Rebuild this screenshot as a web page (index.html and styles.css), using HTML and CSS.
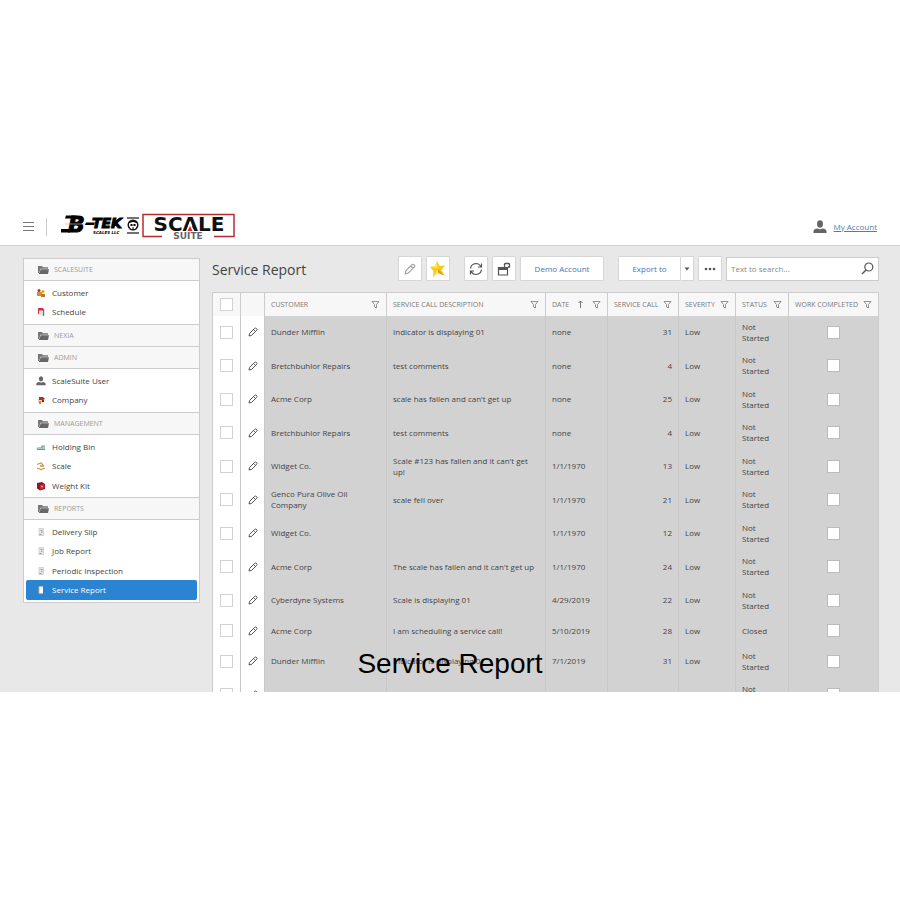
FILE: index.html
```html
<!DOCTYPE html>
<html lang="en">
<head>
  <meta charset="UTF-8">
  <title>Service Report</title>
  <meta name="viewport" content="width=device-width, initial-scale=1.0">
  <link rel="stylesheet" href="styles.css">
</head>
<body>
  <svg class="sprite" aria-hidden="true">
    <symbol id="folder" viewBox="0 0 12 10"><path d="M0 8V1h4l1 1.300h5v1.500H2.500L1 8z" fill="#777"/><path d="M2.800 4.200H11L10 9H.8z" fill="#686868"/></symbol>
    <symbol id="pencil" viewBox="0 0 10 10"><path d="M1 9l.6-2.600L6.500 1.500q1-1 2 0t0 2L3.600 8.400zM5.600 2.500l2 2" fill="none" stroke="currentColor" stroke-width=".9"/></symbol>
    <symbol id="filter" viewBox="0 0 9 9"><path d="M1 1.500h7L5.500 4.500V8l-2-1V4.500z" fill="none" stroke="#888" stroke-width=".9"/></symbol>
    <symbol id="user" viewBox="0 0 14 14"><ellipse cx="7" cy="4" rx="3" ry="3.700"/><path d="M.5 13q-.8-4 4-4.500Q7 10 9.500 8.500q4.800.5 4 4.500z"/></symbol>
    <symbol id="page" viewBox="0 0 10 10"><path d="M3 1.500h4.500v7H3z" fill="#e6e6e6" stroke="#c4c4c4" stroke-width=".7"/><path d="M4.500 3.500h2M5 5.500L6.500 5M3.500 7.500h2" stroke="#888" stroke-width=".8"/></symbol>
  </svg>

  <main class="frame">
    <header class="topbar">
      <button class="menu" aria-label="Menu"><svg width="11" height="10" viewBox="0 0 11 10"><path d="M0 .5h11M0 4.500h11M0 8.500h11" stroke="#777" stroke-width="1"/></svg></button>
      <svg class="logo" width="174" height="28" viewBox="0 0 174 28" role="img" aria-label="B-TEK Scale Suite">
        <path d="M5 2.500h10l-1 3H4zM0 16h10l-1 3.500H-1z" fill="#000"/>
        <g class="logo-btek">
          <text x="7" y="19" class="logo-b">B</text>
          <text x="31" y="15" class="logo-tek">TEK</text>
        </g>
        <path d="M4 11h25" stroke="#bbb" stroke-width=".7"/>
        <path d="M25 9.500h9l-1 2.500H24z" fill="#000"/>
        <text x="32" y="21" class="logo-llc">SCALES LLC</text>
        <path d="M66 5h12M66 20h12" stroke="#444" stroke-width="1.500"/>
        <circle cx="72" cy="12" r="5.500" fill="#111"/>
        <path d="M68 10.500q4-3 8 0v2.500l-2 3h-4l-2-3z" fill="#fff"/>
        <path d="M69.500 11h2v2h-2zM72.500 11h2v2h-2zM71 14.500h2v1h-2z"/>
        <path d="M101 23.500H82V1.500h91v22h-20" fill="none" stroke="#b92b33" stroke-width="1.500"/>
        <text x="128" y="18" class="logo-scale">SCALE</text>
        <path d="M129 8l4 10h-8z" fill="#fff"/>
        <path d="M129 13l2.500 5h-5z" fill="#d22"/>
        <text x="127" y="26" class="logo-suite">SUITE</text>
      </svg>
      <a class="account" href="#"><svg width="14" height="14"><use href="#user"/></svg><span>My Account</span></a>
    </header>

    <div class="content">
      <nav class="sidebar">
        <h2><svg width="12" height="10"><use href="#folder"/></svg>SCALESUITE</h2>
        <ul>
          <li><a href="#"><svg width="10" height="10" viewBox="0 0 10 10"><path d="M1 4h5v4H1z" fill="#c9942c"/><circle cx="3" cy="2.500" r="1.500" fill="#a33"/><circle cx="7" cy="3.500" r="1.500" fill="#d9a520"/><path d="M5 6h4v3H5z" fill="#b57a28"/></svg>Customer</a></li>
          <li><a href="#"><svg width="10" height="10" viewBox="0 0 10 10"><path d="M2 2l5-1 2 1v6l-3 1-4-2z" fill="#d9e4e2"/><path d="M2 1h5v2.500H2zM2 3h1v4H2z" fill="#d2304a"/><path d="M7.500 2v7" stroke="#577" stroke-width="1"/></svg>Schedule</a></li>
        </ul>
        <h2><svg width="12" height="10"><use href="#folder"/></svg>NEXIA</h2>
        <h2><svg width="12" height="10"><use href="#folder"/></svg>ADMIN</h2>
        <ul>
          <li><a href="#"><svg width="10" height="10" fill="#666"><use href="#user"/></svg>ScaleSuite User</a></li>
          <li><a href="#"><svg width="10" height="10" viewBox="0 0 10 10"><path d="M2 4h5v4H2z" fill="#e6d5b8"/><path d="M3 2h4l2 2-2 1H3z" fill="#a8352b"/><path d="M3 6h2v3H3z" fill="#e28a2a"/><path d="M6 5h2v2H6z" fill="#822"/></svg>Company</a></li>
        </ul>
        <h2><svg width="12" height="10"><use href="#folder"/></svg>MANAGEMENT</h2>
        <ul>
          <li><a href="#"><svg width="10" height="10" viewBox="0 0 10 10"><path d="M0 7l2-2h3l1-2h3v4z" fill="#a9cdbb"/><path d="M1 7.500h8M6 4v2" stroke="#6a9a86" stroke-width="1"/></svg>Holding Bin</a></li>
          <li><a href="#"><svg width="10" height="10" viewBox="0 0 10 10"><path d="M1 3.500L5 2l2 2M1 7l4 1.500L9 7" fill="none" stroke="#d29a35" stroke-width="1.300"/><path d="M4 5h4" stroke="#876" stroke-width="1.200"/></svg>Scale</a></li>
          <li><a href="#"><svg width="10" height="10" viewBox="0 0 10 10"><path d="M1 2l5-1 3 2v5l-5 1.500-3-2z" fill="#8b1825"/><path d="M4 4l4.500-1v4L4 8.500z" fill="#d0273b"/><path d="M5 5l2 1" stroke="#f7b4b8"/></svg>Weight Kit</a></li>
        </ul>
        <h2><svg width="12" height="10"><use href="#folder"/></svg>REPORTS</h2>
        <ul>
          <li><a href="#"><svg width="10" height="10"><use href="#page"/></svg>Delivery Slip</a></li>
          <li><a href="#"><svg width="10" height="10"><use href="#page"/></svg>Job Report</a></li>
          <li><a href="#"><svg width="10" height="10"><use href="#page"/></svg>Periodic Inspection</a></li>
          <li><a class="active" href="#"><svg width="10" height="10" viewBox="0 0 10 10"><path d="M3 1.500h4v7H3z" fill="#fff"/><path d="M3 1.500v7" stroke="#d8a868"/></svg>Service Report</a></li>
        </ul>
      </nav>

      <section class="report">
        <div class="toolbar">
          <h1>Service Report</h1>
          <button class="btn icon edit" aria-label="Edit"><svg width="12" height="12"><use href="#pencil"/></svg></button>
          <button class="btn icon star" aria-label="Favorite"><svg width="18" height="18" viewBox="0 0 18 18"><path d="M8 1l2.500 5L16 5.500 12.500 10l3 5.500L9 13l-5 4 .5-6L1 7l5-1z" fill="#f8c91c"/><path d="M8 1l.5 7L1 7l5-1zM9 9l-5 8 5-4z" fill="#ffe95a"/><path d="M9 9l6.500 6.500L9 13z" fill="#e0a010"/></svg></button>
          <button class="btn icon refresh" aria-label="Refresh"><svg width="14" height="14" viewBox="0 0 14 14"><path d="M1.500 6.500Q2 2 7 1.500q3.500 0 5 3.500M12.500 7.500Q12 12 7 12.500q-3.500 0-5-3.500M12.500 1.500V5H9M1.500 12.500V9H5" fill="none" stroke="#555" stroke-width="1.200"/></svg></button>
          <button class="btn icon" aria-label="Open in new window"><svg width="14" height="14" viewBox="0 0 14 14"><path d="M1.500 5.500h9V13h-9z" fill="none" stroke="#555" stroke-width="1.200"/><path d="M1 5h10v3H1z" fill="#555"/><path d="M7.500 5V2.500q0-1 1-1h3q1 0 1 1V5H11" fill="none" stroke="#555" stroke-width="1.300"/></svg></button>
          <button class="btn demo">Demo Account</button>
          <div class="export">
            <button class="btn">Export to</button>
            <button class="btn arrow" aria-label="Export options"><svg width="6" height="4" viewBox="0 0 6 4"><path d="M.5.500h5L3 3.500z" fill="#555"/></svg></button>
          </div>
          <button class="btn icon more" aria-label="More"><svg width="12" height="4" viewBox="0 0 12 4"><circle cx="2" cy="2" r="1.300"/><circle cx="6" cy="2" r="1.300"/><circle cx="10" cy="2" r="1.300"/></svg></button>
          <label class="search">
            <input type="text" placeholder="Text to search..." aria-label="Search">
            <svg width="13" height="13" viewBox="0 0 13 13"><circle cx="7.800" cy="5" r="4" fill="none" stroke="#555" stroke-width="1.200"/><path d="M5 8L1 12" stroke="#555" stroke-width="1.500"/></svg>
          </label>
        </div>

        <table class="grid">
          <colgroup>
            <col class="c-check"><col class="c-edit"><col class="c-customer"><col><col class="c-date"><col class="c-call"><col class="c-severity"><col class="c-status"><col class="c-done">
          </colgroup>
          <thead>
            <tr>
              <th><input type="checkbox" aria-label="Select all"></th>
              <th></th>
              <th><div>CUSTOMER<svg width="9" height="9"><use href="#filter"/></svg></div></th>
              <th><div>SERVICE CALL DESCRIPTION<svg width="9" height="9"><use href="#filter"/></svg></div></th>
              <th><div>DATE<svg class="sort" width="7" height="9" viewBox="0 0 7 9"><path d="M3.500 8V1M1.500 3l2-2 2 2" fill="none" stroke="#777"/></svg><svg width="9" height="9"><use href="#filter"/></svg></div></th>
              <th><div>SERVICE CALL<svg width="9" height="9"><use href="#filter"/></svg></div></th>
              <th><div>SEVERITY<svg width="9" height="9"><use href="#filter"/></svg></div></th>
              <th><div>STATUS<svg width="9" height="9"><use href="#filter"/></svg></div></th>
              <th><div>WORK COMPLETED<svg width="9" height="9"><use href="#filter"/></svg></div></th>
            </tr>
          </thead>
          <tbody>
            <tr><td><input type="checkbox" aria-label="Select row"></td><td><svg width="10" height="10"><use href="#pencil"/></svg></td><td>Dunder Mifflin</td><td>Indicator is displaying 01</td><td>none</td><td>31</td><td>Low</td><td>Not Started</td><td><input type="checkbox" aria-label="Work completed"></td></tr>
            <tr><td><input type="checkbox" aria-label="Select row"></td><td><svg width="10" height="10"><use href="#pencil"/></svg></td><td>Bretchbuhlor Repairs</td><td>test comments</td><td>none</td><td>4</td><td>Low</td><td>Not Started</td><td><input type="checkbox" aria-label="Work completed"></td></tr>
            <tr><td><input type="checkbox" aria-label="Select row"></td><td><svg width="10" height="10"><use href="#pencil"/></svg></td><td>Acme Corp</td><td>scale has fallen and can't get up</td><td>none</td><td>25</td><td>Low</td><td>Not Started</td><td><input type="checkbox" aria-label="Work completed"></td></tr>
            <tr><td><input type="checkbox" aria-label="Select row"></td><td><svg width="10" height="10"><use href="#pencil"/></svg></td><td>Bretchbuhlor Repairs</td><td>test comments</td><td>none</td><td>4</td><td>Low</td><td>Not Started</td><td><input type="checkbox" aria-label="Work completed"></td></tr>
            <tr><td><input type="checkbox" aria-label="Select row"></td><td><svg width="10" height="10"><use href="#pencil"/></svg></td><td>Widget Co.</td><td>Scale #123 has fallen and it can't get up!</td><td>1/1/1970</td><td>13</td><td>Low</td><td>Not Started</td><td><input type="checkbox" aria-label="Work completed"></td></tr>
            <tr><td><input type="checkbox" aria-label="Select row"></td><td><svg width="10" height="10"><use href="#pencil"/></svg></td><td>Genco Pura Olive Oil Company</td><td>scale fell over</td><td>1/1/1970</td><td>21</td><td>Low</td><td>Not Started</td><td><input type="checkbox" aria-label="Work completed"></td></tr>
            <tr><td><input type="checkbox" aria-label="Select row"></td><td><svg width="10" height="10"><use href="#pencil"/></svg></td><td>Widget Co.</td><td></td><td>1/1/1970</td><td>12</td><td>Low</td><td>Not Started</td><td><input type="checkbox" aria-label="Work completed"></td></tr>
            <tr><td><input type="checkbox" aria-label="Select row"></td><td><svg width="10" height="10"><use href="#pencil"/></svg></td><td>Acme Corp</td><td>The scale has fallen and it can't get up</td><td>1/1/1970</td><td>24</td><td>Low</td><td>Not Started</td><td><input type="checkbox" aria-label="Work completed"></td></tr>
            <tr><td><input type="checkbox" aria-label="Select row"></td><td><svg width="10" height="10"><use href="#pencil"/></svg></td><td>Cyberdyne Systems</td><td>Scale is displaying 01</td><td>4/29/2019</td><td>22</td><td>Low</td><td>Not Started</td><td><input type="checkbox" aria-label="Work completed"></td></tr>
            <tr class="short"><td><input type="checkbox" aria-label="Select row"></td><td><svg width="10" height="10"><use href="#pencil"/></svg></td><td>Acme Corp</td><td>I am scheduling a service call!</td><td>5/10/2019</td><td>28</td><td>Low</td><td>Closed</td><td><input type="checkbox" aria-label="Work completed"></td></tr>
            <tr><td><input type="checkbox" aria-label="Select row"></td><td><svg width="10" height="10"><use href="#pencil"/></svg></td><td>Dunder Mifflin</td><td>Indicator is displaying 01</td><td>7/1/2019</td><td>31</td><td>Low</td><td>Not Started</td><td><input type="checkbox" aria-label="Work completed"></td></tr>
            <tr><td><input type="checkbox" aria-label="Select row"></td><td><svg width="10" height="10"><use href="#pencil"/></svg></td><td>Acme Corp</td><td></td><td>7/10/2019</td><td>30</td><td>Low</td><td>Not Started</td><td><input type="checkbox" aria-label="Work completed"></td></tr>
          </tbody>
        </table>
      </section>
    </div>
    <p class="caption">Service Report</p>
  </main>
</body>
</html>
```
FILE: styles.css
```css
* { box-sizing: border-box; }
body { margin: 0; min-height: 100vh; display: flex; align-items: center; background: #fff; color: #444; font: 8px/12px "Open Sans", "Noto Sans", sans-serif; }
h1, h2, ul, p { margin: 0; padding: 0; font-weight: normal; }
ul { list-style: none; }
button, input { font: inherit; color: inherit; margin: 0; padding: 0; }
svg { flex: none; }
.sprite { position: absolute; width: 0; height: 0; }

/* the screen is cropped like a video still, with the caption over it */
.frame { position: relative; width: 100%; aspect-ratio: 900 / 484; overflow: hidden; background: #e8e8e8; }
.caption { position: absolute; left: 0; right: 0; bottom: 12px; text-align: center; font: 28px/32px "Liberation Sans", sans-serif; color: #000; }

.topbar { display: flex; align-items: center; height: 38px; padding: 0 23px; background: #fff; border-bottom: 1px solid #d0d0d0; }
.menu { display: flex; align-items: center; height: 18px; padding-right: 12px; border: 0; border-right: 1px solid #ccc; background: none; }
.logo { margin-left: 14px; }
.logo text { font-family: "DejaVu Sans", sans-serif; font-weight: bold; }
.logo-btek text { font-style: italic; stroke: #000; stroke-width: 1px; }
.logo .logo-b { font-size: 22px; }
.logo .logo-tek { font-size: 14px; }
.logo .logo-llc { font-size: 4px; font-style: italic; }
.logo .logo-scale { font-size: 20px; text-anchor: middle; fill: #111; }
.logo .logo-suite { font-size: 9px; text-anchor: middle; fill: #666; }
.account { display: flex; align-items: center; gap: 7px; margin-left: auto; color: #4a80ad; fill: #666; }

.content { display: flex; align-items: flex-start; gap: 12px; padding: 10px 21px 0 23px; }

.sidebar { flex: none; width: 177px; margin-top: 2px; background: #fff; border: 1px solid #ccc; border-top: 0; }
.sidebar h2 { display: flex; align-items: center; gap: 4px; height: 22px; padding-left: 14px; font-size: 7px; color: #999; background: #f7f7f7; border-top: 1px solid #ccc; }
.sidebar ul { padding: 2px; border-top: 1px solid #ccc; }
.sidebar a { display: flex; align-items: center; gap: 6px; height: 19px; padding-left: 10px; color: #444; text-decoration: none; border-radius: 2px; }
.sidebar li:nth-child(even) a { height: 20px; }
.sidebar a.active { background: #2a84d2; color: #fff; }

.report { flex: 1; min-width: 0; }
.toolbar { display: flex; align-items: center; gap: 4px; height: 25px; margin-bottom: 11px; }
.toolbar h1 { flex: 1; font-size: 14px; line-height: 20px; padding-top: 2px; }
.btn { display: flex; align-items: center; justify-content: center; height: 25px; background: #fff; border: 1px solid #d6d6d6; border-radius: 1px; color: #3f76b5; }
.icon { width: 24px; color: #999; }
.refresh { margin-left: 10px; }
.demo { width: 84px; }
.export { display: flex; margin-left: 10px; }
.export .btn { width: 63px; }
.export .arrow { width: 13px; border-left: 0; }
.more { fill: #555; }
.search { display: flex; align-items: center; width: 153px; height: 24px; padding: 0 4px; background: #fff; border: 1px solid #ccc; }
.search input { flex: 1; min-width: 0; border: 0; outline: 0; background: none; }
.search input::placeholder { color: #888; }

.grid { width: 100%; table-layout: fixed; border-collapse: separate; border-spacing: 0; border: 1px solid #ccc; border-bottom: 0; }
.c-check { width: 28px; }
.c-edit { width: 24px; }
.c-customer { width: 122px; }
.c-date { width: 62px; }
.c-call { width: 71px; }
.c-severity { width: 57px; }
.c-status { width: 53px; }
.c-done { width: 89px; }
.grid th { height: 23px; padding: 0 6px; font-size: 7px; font-weight: normal; color: #777; background: #f7f7f7; border-right: 1px solid #ccc; }
.grid th div { display: flex; align-items: center; justify-content: space-between; white-space: nowrap; }
.grid td { height: 34px; padding: 0 6px 3px; line-height: 11px; background: #d2d2d2; border-right: 1px solid #c8c8c8; }
.grid tr:nth-child(even) td { height: 33px; }
.grid tr.short td { height: 27px; }
.grid td:nth-child(-n+2) { background: #fff; }
.grid th:nth-child(-n+2) { padding: 0; }
.grid td:nth-child(-n+2), .grid td:last-child { padding: 0 0 2px; }
.grid td:nth-child(6) { text-align: right; }
.grid td:last-child, .grid th:last-child { border-right: 0; }
.grid svg, .grid input { display: block; }
.grid td svg { margin: 0 auto; }
.grid input { appearance: none; width: 13px; height: 13px; margin: 0 auto; background: #fff; border: 1px solid #d2d2d2; }
.grid td:last-child input { border-color: #bbb; }
```
